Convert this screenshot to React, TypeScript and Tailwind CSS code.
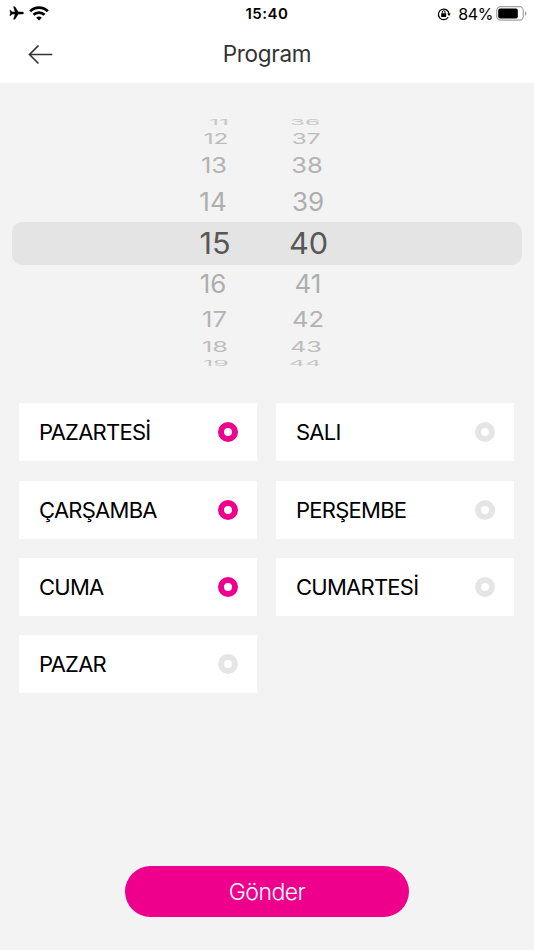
import { useState } from 'react'

// Each wheel row gets flatter and lighter the further it is from the selected one
const ROWS = [
  { hour: '11', minute: '36', height: 11, size: 25, sx: 0.98, sy: 0.32, hx: 5, mx: -2, color: '#c8c8c8' },
  { hour: '12', minute: '37', height: 22, size: 25, sx: 0.97, sy: 0.6, hx: 2, mx: -1, color: '#bdbdbd' },
  { hour: '13', minute: '38', height: 32, size: 25, sx: 1.02, sy: 0.86, hx: 0, mx: 0, color: '#b3b3b3' },
  { hour: '14', minute: '39', height: 40, size: 25, sx: 1.04, sy: 1.02, hx: -1, mx: 1, color: '#aeaeae' },
  { hour: '15', minute: '40', height: 43, size: 29.5, sx: 1.04, sy: 1, hx: 1, mx: 1.5, color: '#575757' },
  { hour: '16', minute: '41', height: 39, size: 25, sx: 1.04, sy: 1.02, hx: -1, mx: 1, color: '#aeaeae' },
  { hour: '17', minute: '42', height: 32, size: 25, sx: 1.02, sy: 0.86, hx: 0.5, mx: 1, color: '#b3b3b3' },
  { hour: '18', minute: '43', height: 22, size: 25, sx: 1.01, sy: 0.6, hx: 1, mx: -1, color: '#bdbdbd' },
  { hour: '19', minute: '44', height: 11, size: 25, sx: 1.01, sy: 0.29, hx: 2, mx: -2, color: '#c5c5c5' },
]

const DAYS = ['PAZARTESİ', 'SALI', 'ÇARŞAMBA', 'PERŞEMBE', 'CUMA', 'CUMARTESİ', 'PAZAR']

function StatusBar() {
  return (
    <div className="grid h-7 grid-cols-3 items-center pl-[9px] pr-[7px] text-black">
      <div className="-mt-0.5 flex items-center gap-[5px]">
        <svg width="15" height="14" viewBox="0 0 15 14" fill="currentColor" stroke="currentColor" strokeWidth=".5">
          <path d="M14.6 7c0-.6-.8-1-1.7-1H9.3L5.9.8H4.6L6.2 6H3.1L1.8 4.4H.9L1.5 7 .9 9.6h.9L3.1 8h3.1l-1.6 5.2h1.3L9.3 8h3.6c.9 0 1.7-.4 1.7-1z" />
        </svg>
        <svg width="20" height="15" viewBox="0 0 20 15" fill="none" stroke="currentColor" strokeWidth="2.7">
          <path d="M1.2 5.2a12.6 12.6 0 0 1 17.6 0" />
          <path d="M4.5 8.8a7.9 7.9 0 0 1 11 0" />
          <path d="M10 14.6 7.2 11.8a4 4 0 0 1 5.6 0z" fill="currentColor" stroke="none" />
        </svg>
      </div>
      <div className="-ml-0.5 -mt-px text-center text-[15px] font-semibold leading-none tracking-[0.5px]">15:40</div>
      <div className="-mt-px flex items-center justify-end">
        <svg className="mr-[7px]" width="14" height="14" viewBox="0 0 14 14" fill="none" stroke="currentColor">
          <path d="M11.2 10.2A5.3 5.3 0 1 1 12 7" strokeWidth="1.2" />
          <path d="M10.2 6.6h3.6L12 9z" fill="currentColor" stroke="none" />
          <rect x="4.2" y="6.2" width="5" height="3.8" rx=".5" fill="currentColor" stroke="none" />
          <path d="M5.3 6.5V5.2a1.4 1.4 0 0 1 2.8 0v1.3" strokeWidth="1" />
        </svg>
        <span className="mr-[3px] text-[16px] leading-none tracking-[-0.4px]">84%</span>
        <svg width="31" height="15" viewBox="0 0 31 15">
          <rect x=".7" y=".7" width="26.6" height="13.4" rx="3.8" fill="none" stroke="#a3a3a3" strokeWidth="1.2" />
          <rect x="2.2" y="2.4" width="19.6" height="10" rx="2" />
          <path d="M29 5v5c1.9-.9 1.9-4.1 0-5z" fill="#a3a3a3" />
        </svg>
      </div>
    </div>
  )
}

function TimeWheel() {
  return (
    <div className="mx-3 flex flex-col">
      {ROWS.map(row => (
        <div
          key={row.hour}
          className={`flex items-center justify-center gap-11 rounded-[10px] ${row.hour === '15' ? 'bg-[#e4e4e4]' : ''}`}
          style={{ height: row.height, color: row.color, fontSize: row.size }}
        >
          <span
            className="w-12 text-center leading-none"
            style={{ transform: `translate(${row.hx - 7}px, -0.4px) scale(${row.sx}, ${row.sy})` }}
          >
            {row.hour}
          </span>
          <span
            className="w-12 text-center leading-none"
            style={{ transform: `translate(${row.mx - 6}px, -0.4px) scale(${row.sx}, ${row.sy})` }}
          >
            {row.minute}
          </span>
        </div>
      ))}
    </div>
  )
}

export default function App() {
  const [selected, setSelected] = useState(['PAZARTESİ', 'ÇARŞAMBA', 'CUMA'])

  function toggle(day: string) {
    setSelected(s => (s.includes(day) ? s.filter(d => d !== day) : [...s, day]))
  }

  return (
    <div className="flex h-[950px] w-[534px] flex-col overflow-hidden bg-[#f3f3f3] font-['Inter',sans-serif]">
      <div className="h-[83px] bg-white">
        <StatusBar />
        <div className="grid h-[53px] grid-cols-[1fr_auto_1fr] items-center">
          <button className="ml-7 w-6">
            <svg width="25" height="20" viewBox="0 0 25 20" fill="none" stroke="#333" strokeWidth="1.6">
              <path d="M24.3 9.5H1.5M10.5.5l-9 9 9 9" />
            </svg>
          </button>
          <h1 className="text-[22.5px] leading-none tracking-[-0.3px] text-[#333]">Program</h1>
        </div>
      </div>

      <div className="pt-[34px]">
        <TimeWheel />
      </div>

      {/* Days */}
      <div className="mt-[34.2px] grid grid-cols-2 gap-x-[19px] gap-y-[19.4px] pl-[19px] pr-5">
        {DAYS.map(day => (
          <button
            key={day}
            onClick={() => toggle(day)}
            className="flex h-[58px] items-center justify-between bg-white pl-5 pr-[19px] text-[22px] tracking-[-0.75px] text-black"
          >
            <span className="pt-px">{day}</span>
            <span
              className={`size-5 rounded-full border-[6px] ${
                selected.includes(day) ? 'border-[#ee008c]' : 'border-[#e5e5e5]'
              }`}
            />
          </button>
        ))}
      </div>

      <button className="mx-auto mb-[33px] mt-auto h-[51px] w-[284px] rounded-full bg-[#ee008c] pt-0.5 text-[23px] font-light tracking-[-0.5px] text-white">
        Gönder
      </button>
    </div>
  )
}
